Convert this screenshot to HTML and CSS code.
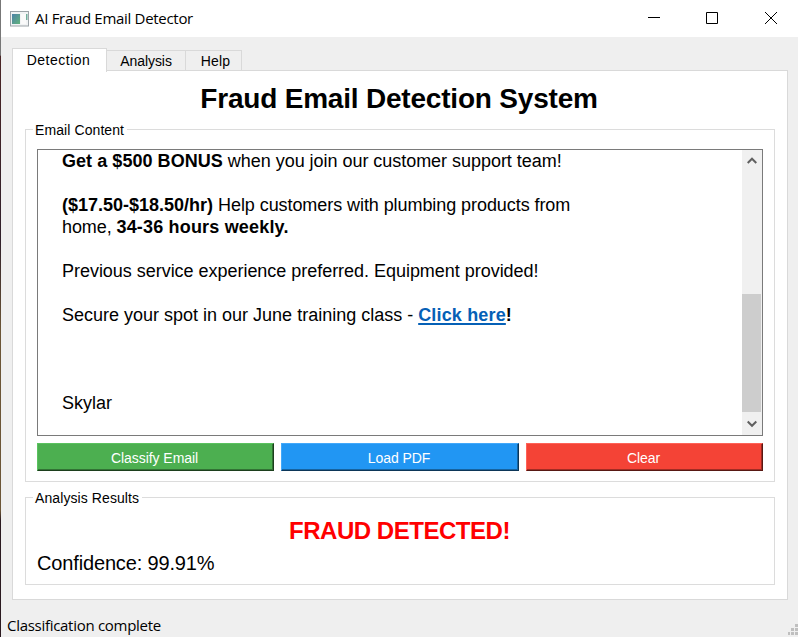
FILE: index.html
```html
<!DOCTYPE html>
<html lang="en">
<head>
<meta charset="utf-8">
<title>AI Fraud Email Detector</title>
<link rel="stylesheet" href="styles.css">
</head>
<body>
<div class="window">
  <header class="titlebar">
    <svg class="app-icon" width="19" height="16" viewBox="0 0 19 16">
      <defs><linearGradient id="pane" x1="0" y1="0" x2="1" y2="1"><stop offset="0" stop-color="#4d82a8"/><stop offset="1" stop-color="#62b37c"/></linearGradient></defs>
      <rect x=".5" y=".5" width="18" height="14.500" fill="#f1f3f4" stroke="#9ca3a8"/>
      <rect x="2" y="3" width="8" height="10" fill="url(#pane)"/>
      <rect x="11" y="3" width="5" height="10" fill="#fafafa"/>
      <rect x="16" y="3" width="1.500" height="6" fill="#72ae9c"/>
    </svg>
    <span class="title">AI Fraud Email Detector</span>
    <svg class="controls" width="131" height="14" viewBox="0 0 131 14" fill="none" stroke="#000">
      <path d="M0 6.500H12M58.500 1.500H69.500V12.500H58.500ZM117 1L129 13M129 1L117 13"/>
    </svg>
  </header>
  <nav class="tabs">
    <div class="tab active"><span>Detection</span></div>
    <div class="tab analysis"><span>Analysis</span></div>
    <div class="tab help"><span>Help</span></div>
  </nav>
  <main class="panel">
    <h1><span>Fraud Email Detection System</span></h1>
    <section class="group content">
      <h2><span class="legend-a">Email Content</span></h2>
      <div class="editor">
        <div class="mail">
          <p><span class="l1"><b>Get a $500 BONUS</b> when you join our customer support team!</span></p>
          <p><span class="l2"><b>($17.50-$18.50/hr)</b> Help customers with plumbing products from</span><br><span class="l3">home, <b>34-36 hours weekly.</b></span></p>
          <p><span class="l4">Previous service experience preferred. Equipment provided!</span></p>
          <p><span class="l5">Secure your spot in our June training class - <b><a>Click here</a>!</b></span></p>
          <p class="signature"><span>Skylar</span></p>
        </div>
        <div class="scrollbar">
          <svg width="10" height="8" viewBox="0 0 10 8" fill="none" stroke="#606060" stroke-width="2"><path d="M.7 6L5 1.700L9.300 6"/></svg>
          <div class="thumb"></div>
          <svg width="10" height="8" viewBox="0 0 10 8" fill="none" stroke="#606060" stroke-width="2"><path d="M.7 1.500L5 5.800L9.300 1.500"/></svg>
        </div>
      </div>
      <div class="buttons">
        <button class="green"><span>Classify Email</span></button>
        <button class="blue"><span>Load PDF</span></button>
        <button class="red"><span>Clear</span></button>
      </div>
    </section>
    <section class="group results">
      <h2><span class="legend-b">Analysis Results</span></h2>
      <div class="verdict"><span>FRAUD DETECTED!</span></div>
      <div class="confidence"><span>Confidence: 99.91%</span></div>
    </section>
  </main>
  <footer class="status">
    <span>Classification complete</span>
    <svg width="10" height="11" viewBox="0 0 10 11" fill="#bfbfbf"><path d="M7 0h3v3H7zM3 4h3v3H3zM7 4h3v3H7zM0 8h2v3H0zM3 8h3v3H3zM7 8h3v3H7z"/></svg>
  </footer>
</div>
</body>
</html>
```
FILE: styles.css
```css
* { box-sizing: border-box; }
body { margin: 0; width: 798px; height: 637px; overflow: hidden; background: #efefef; color: #000; font-family: "Liberation Sans", Arial, sans-serif; }
h1, h2, p { margin: 0; font-weight: normal; }
.window { height: 637px; display: flex; flex-direction: column; border-left: 1px solid; border-image: linear-gradient(#777 0 56px, #4a2525 57px, #30202a 240px, #6b5536 330px, #6b5536 510px, #2b1a20 520px) 1; }
.titlebar { height: 37px; flex: none; background: #fff; display: flex; align-items: center; padding: 0 20px 0 9px; }
.app-icon { margin-right: 6px; }
.title { flex: 1; margin-top: -2px; font: 15px/20px "Open Sans", sans-serif; letter-spacing: -.3px; white-space: nowrap; }
.controls { margin-right: -1px; margin-top: -1px; }
.tabs { height: 34px; flex: none; padding-left: 11px; display: flex; align-items: flex-end; font-size: 14px; line-height: 20px; }
.tab { height: 21px; border: 1px solid #d9d9d9; border-left: 0; border-bottom: 0; text-align: center; white-space: nowrap; }
.tab.active { width: 95px; height: 24px; border-left: 1px solid #d9d9d9; background: #fff; margin-bottom: -1px; z-index: 1; padding: 1px 2px 0 0; letter-spacing: .5px; }
.analysis { width: 79px; letter-spacing: -.05px; }
.help { width: 56px; padding-left: 4px; letter-spacing: .2px; }
.panel { height: 530px; margin: -1px 10px 0 11px; border: 1px solid #d9d9d9; background: #fff; padding: 0 12px; }
h1 { height: 58px; padding: 11px 2px 0 0; font-size: 28px; line-height: 33px; letter-spacing: -.2px; font-weight: bold; text-align: center; white-space: nowrap; }
.group { border: 1px solid #dcdcdc; padding: 0 11px; }
.group h2 { width: max-content; height: 18px; margin: -9px 0 0 -4px; padding: 0 3px 0 2px; background: #fff; font-size: 14px; line-height: 19px; letter-spacing: .09px; white-space: nowrap; }
.content { height: 353px; }
.editor { height: 287px; margin-top: 10px; border: 1px solid #7a7a7a; display: flex; justify-content: space-between; }
.mail { padding-left: 24px; font-size: 18px; line-height: 22px; white-space: nowrap; }
.mail p { margin-bottom: 22px; }
.mail .signature { margin-top: 66px; }
.l1 { letter-spacing: -.035px; }
.l1 b { letter-spacing: .05px; }
.l2 { letter-spacing: -.07px; }
.l2 b { letter-spacing: 0; }
.l3 { letter-spacing: -.1px; }
.l3 b { letter-spacing: .18px; }
.l4 { letter-spacing: -.03px; }
.mail a { color: #0560b6; letter-spacing: .16px; text-decoration: underline; text-decoration-thickness: 2px; text-underline-offset: 2px; text-decoration-skip-ink: none; }
.scrollbar { width: 20px; background: #f0f0f0; display: flex; flex-direction: column; align-items: center; padding: 7px 1px 7px 0; }
.thumb { width: 19px; height: 118px; margin: 129px 0 auto; background: #cdcdcd; }
.buttons { display: grid; grid-template-columns: 237px 238px 237px; gap: 7px; margin-top: 7px; }
button { height: 28px; padding: 2px 2px 0 0; border: 1px solid; color: #fff; font: 14px/20px "Liberation Sans", Arial, sans-serif; letter-spacing: -.05px; }
.green { background: #4caf50; border-color: #5ac25f #1c3f1d #1c3f1d #5ac25f; box-shadow: inset -1px -1px #327335; }
.blue { background: #2196f3; border-color: #42a8fa #0c3658 #0c3658 #42a8fa; box-shadow: inset -1px -1px #1663a0; }
.red { background: #f44336; border-color: #ff6257 #581813 #581813 #ff6257; box-shadow: inset -1px -1px #a12c24; }
.results { height: 88px; margin-top: 15px; }
.verdict { margin-top: 10px; height: 28px; padding-right: 1px; color: #f00; font-size: 24px; line-height: 28px; letter-spacing: -.47px; font-weight: bold; text-align: center; }
.confidence { margin-top: 6px; font-size: 20px; line-height: 24px; letter-spacing: -.15px; }
.status { flex: 1; display: flex; align-items: flex-end; justify-content: space-between; padding-left: 6px; font: 15px/20px "Open Sans", sans-serif; letter-spacing: -.29px; white-space: nowrap; }
.status span { margin-bottom: 2px; }
.status svg { margin-bottom: 2px; }
```
